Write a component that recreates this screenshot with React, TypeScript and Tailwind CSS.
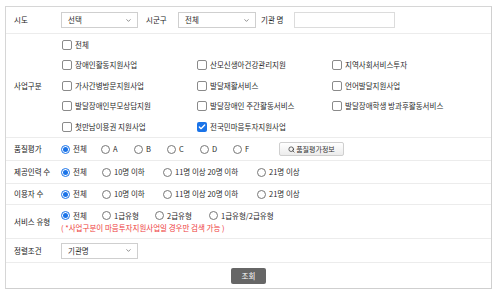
import { Search, ChevronDown, Check } from 'lucide-react';

const font = { fontFamily: '"Noto Sans CJK KR", "Noto Sans", sans-serif' };

function Box({ checked = false }: { checked?: boolean }) {
  if (checked) {
    return (
      <span className="flex h-[10px] w-[10px] shrink-0 items-center justify-center rounded-[2px] bg-[#1a73e8]">
        <Check size={8} strokeWidth={4} className="text-white" />
      </span>
    );
  }
  return <span className="h-[10px] w-[10px] shrink-0 rounded-[2px] border border-[#8a8a8a] bg-white" />;
}

function Radio({ checked = false }: { checked?: boolean }) {
  if (checked) {
    return (
      <span className="flex h-[9px] w-[9px] shrink-0 items-center justify-center rounded-full border border-[#1a73e8] bg-white">
        <span className="h-[5px] w-[5px] rounded-full bg-[#1a73e8]" />
      </span>
    );
  }
  return <span className="h-[9px] w-[9px] shrink-0 rounded-full border border-[#777] bg-white" />;
}

function Select({ value, width }: { value: string; width: string }) {
  return (
    <div className={`flex h-[16px] items-center justify-between border border-[#cfcfcf] bg-white pl-[6px] pr-[5px] ${width}`}>
      <span>{value}</span>
      <ChevronDown size={7} strokeWidth={2} className="text-[#444]" />
    </div>
  );
}

function Row({ label, h, children }: { label: string; h: string; children: React.ReactNode }) {
  return (
    <div className={`flex border-b border-[#ececec] ${h}`}>
      <div className="flex w-[55px] shrink-0 items-center pl-[8px] text-[#222]">{label}</div>
      <div className="flex min-w-0 flex-1 items-center">{children}</div>
    </div>
  );
}

const programs: { name: string; checked?: boolean }[][] = [
  [{ name: '전체' }],
  [{ name: '장애인활동지원사업' }, { name: '산모신생아건강관리지원' }, { name: '지역사회서비스투자' }],
  [{ name: '가사간병방문지원사업' }, { name: '발달재활서비스' }, { name: '언어발달지원사업' }],
  [{ name: '발달장애인부모상담지원' }, { name: '발달장애인 주간활동서비스' }, { name: '발달장애학생 방과후활동서비스' }],
  [{ name: '첫만남이용권 지원사업' }, { name: '전국민마음투자지원사업', checked: true }],
];

function RadioGroup({ items }: { items: { label: string; w: string; checked?: boolean }[] }) {
  return (
    <div className="flex items-center">
      {items.map((it) => (
        <label key={it.label} className={`flex items-center gap-[3px] ${it.w}`}>
          <Radio checked={it.checked} />
          <span>{it.label}</span>
        </label>
      ))}
    </div>
  );
}

export default function App() {
  return (
    <div className="h-[293px] w-[500px] bg-white pl-[5px] pt-[6px] text-[7.5px] leading-[12px] text-[#2a2a2a]" style={font}>
      <div className="w-[487px] border border-[#d6d6d6] border-b-[#cfcfcf] border-r-[#d0d0d0]">
        <Row label="시도" h="h-[27px]">
          <Select value="선택" width="w-[77px]" />
          <span className="ml-[8px] w-[32px] text-[#222]">시군구</span>
          <Select value="전체" width="w-[78px]" />
          <span className="ml-[5px] w-[33px] text-[#222]">기관 명</span>
          <div className="h-[16px] w-[101px] border border-[#dcdcdc] bg-white" />
        </Row>

        <Row label="사업구분" h="h-[104px]">
          <div className="flex flex-col pl-[1px]">
            {programs.map((row, i) => (
              <div key={i} className="grid h-[20.5px] grid-cols-[135px_135px_160px] items-center">
                {row.map((p) => (
                  <label key={p.name} className="flex items-center gap-[3px]">
                    <Box checked={p.checked} />
                    <span>{p.name}</span>
                  </label>
                ))}
              </div>
            ))}
          </div>
        </Row>

        <Row label="품질평가" h="h-[23px]">
          <RadioGroup
            items={[
              { label: '전체', w: 'w-[40px]', checked: true },
              { label: 'A', w: 'w-[33px]' },
              { label: 'B', w: 'w-[33px]' },
              { label: 'C', w: 'w-[33px]' },
              { label: 'D', w: 'w-[33px]' },
              { label: 'F', w: 'w-[33px]' },
            ]}
          />
          <button className="ml-[13px] flex h-[14px] w-[65px] items-center justify-center gap-[1px] rounded-[2px] border border-[#cfcfcf] bg-gradient-to-b from-white to-[#ececec] text-[7px] text-[#333]">
            <Search size={7} strokeWidth={2.5} />
            품질평가정보
          </button>
        </Row>

        <Row label="제공인력 수" h="h-[23px]">
          <RadioGroup
            items={[
              { label: '전체', w: 'w-[41px]', checked: true },
              { label: '10명 이하', w: 'w-[61px]' },
              { label: '11명 이상 20명 이하', w: 'w-[94px]' },
              { label: '21명 이상', w: 'w-[60px]' },
            ]}
          />
        </Row>

        <Row label="이용자 수" h="h-[21px]">
          <RadioGroup
            items={[
              { label: '전체', w: 'w-[41px]', checked: true },
              { label: '10명 이하', w: 'w-[61px]' },
              { label: '11명 이상 20명 이하', w: 'w-[94px]' },
              { label: '21명 이상', w: 'w-[60px]' },
            ]}
          />
        </Row>

        <Row label="서비스 유형" h="h-[34px]">
          <div className="flex flex-col">
            <RadioGroup
              items={[
                { label: '전체', w: 'w-[41px]', checked: true },
                { label: '1급유형', w: 'w-[53px]' },
                { label: '2급유형', w: 'w-[54px]' },
                { label: '1급유형/2급유형', w: 'w-[80px]' },
              ]}
            />
            <span className="text-[#ee3b3b]">( *사업구분이 마음투자지원사업일 경우만 검색 가능 )</span>
          </div>
        </Row>

        <Row label="정렬조건" h="h-[24px]">
          <Select value="기관명" width="w-[77px]" />
        </Row>

        <div className="flex h-[25px] items-center justify-center">
          <button className="flex h-[16px] w-[35px] items-center justify-center rounded-[2px] bg-[#666] text-white">조회</button>
        </div>
      </div>
    </div>
  );
}
